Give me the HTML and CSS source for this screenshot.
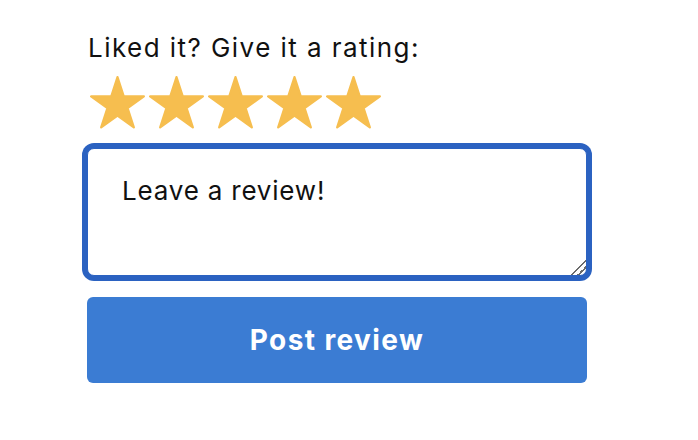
FILE: index.html
```html
<!DOCTYPE html>
<html lang="en">
<head>
<meta charset="utf-8">
<title>Review</title>
<link rel="stylesheet" href="styles.css">
</head>
<body>
<div class="review">
  <p class="prompt">Liked it? Give it a rating:</p>
  <div class="stars">
    <svg class="star" viewBox="-99 -104 198 189"><polygon points="0,-100 22.45,-30.9 95.1,-30.9 36.3,11.8 58.8,80.9 0,38.2 -58.8,80.9 -36.3,11.8 -95.1,-30.9 -22.45,-30.9"/></svg>
    <svg class="star" viewBox="-99 -104 198 189"><polygon points="0,-100 22.45,-30.9 95.1,-30.9 36.3,11.8 58.8,80.9 0,38.2 -58.8,80.9 -36.3,11.8 -95.1,-30.9 -22.45,-30.9"/></svg>
    <svg class="star" viewBox="-99 -104 198 189"><polygon points="0,-100 22.45,-30.9 95.1,-30.9 36.3,11.8 58.8,80.9 0,38.2 -58.8,80.9 -36.3,11.8 -95.1,-30.9 -22.45,-30.9"/></svg>
    <svg class="star" viewBox="-99 -104 198 189"><polygon points="0,-100 22.45,-30.9 95.1,-30.9 36.3,11.8 58.8,80.9 0,38.2 -58.8,80.9 -36.3,11.8 -95.1,-30.9 -22.45,-30.9"/></svg>
    <svg class="star" viewBox="-99 -104 198 189"><polygon points="0,-100 22.45,-30.9 95.1,-30.9 36.3,11.8 58.8,80.9 0,38.2 -58.8,80.9 -36.3,11.8 -95.1,-30.9 -22.45,-30.9"/></svg>
  </div>
  <textarea class="review-box">Leave a review!</textarea>
  <button class="post">Post review</button>
</div>
</body>
</html>
```
FILE: styles.css
```css
html, body {
  margin: 0;
  padding: 0;
  background: #ffffff;
}
body {
  font-family: "Inter", "Open Sans", sans-serif;
  color: #111111;
}
.review {
  display: flex;
  flex-direction: column;
  align-items: flex-start;
  width: 500px;
  padding: 32px 0 0 87px;
}
.prompt {
  margin: 0 0 0 1px;
  font-size: 26px;
  line-height: 32px;
  letter-spacing: 1.45px;
}
.stars {
  display: flex;
  gap: 4px;
  margin: 12px 0 0 3px;
}
.star {
  width: 55px;
  height: 52.5px;
  display: block;
}
.star polygon {
  fill: #f6be4f;
  stroke: #f6be4f;
  stroke-width: 8;
  stroke-linejoin: round;
}
.review-box {
  box-sizing: border-box;
  width: 500px;
  height: 128px;
  margin: 19px 0 0 0;
  padding: 26px 34px 22px;
  border: 1px solid #2b62c1;
  border-radius: 7px;
  box-shadow: 0 0 0 5px #2b62c1;
  outline: none;
  font-family: "Inter", "Open Sans", sans-serif;
  font-size: 26px;
  line-height: 32px;
  letter-spacing: 0.8px;
  color: #111111;
  background: #ffffff;
}
.review-box::-webkit-resizer {
  background: linear-gradient(135deg,
    transparent 0 48%,
    #6b6b6b 48% 55%,
    transparent 55% 70%,
    #6b6b6b 70% 77%,
    transparent 77%);
}
.post {
  box-sizing: border-box;
  width: 500px;
  height: 86px;
  margin-top: 21px;
  border: none;
  border-radius: 6px;
  background: #3b7cd3;
  color: #ffffff;
  font-family: "Inter", "Open Sans", sans-serif;
  font-weight: 700;
  font-size: 28px;
  letter-spacing: 1.4px;
}
```
